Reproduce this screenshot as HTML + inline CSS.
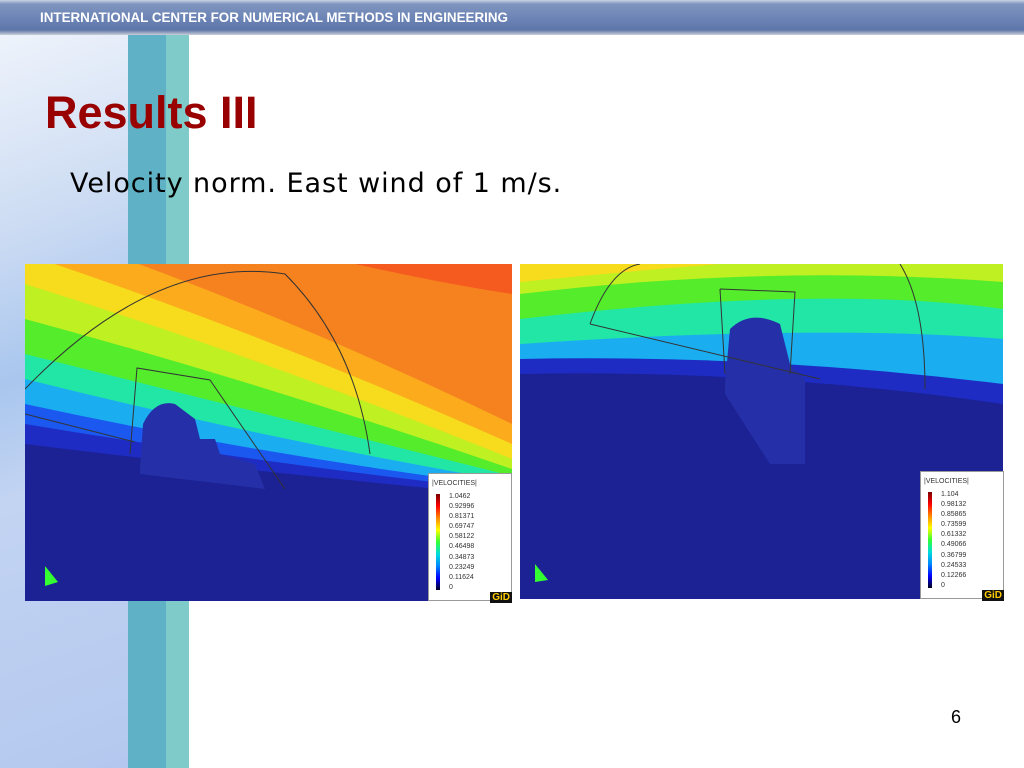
<!DOCTYPE html>
<html><head><meta charset="utf-8"><style>
*{margin:0;padding:0}
body{width:1024px;height:768px;position:relative;overflow:hidden;background:#fff;font-family:"Liberation Sans",sans-serif}
.hdr{position:absolute;left:0;top:0;width:1024px;height:35px;background:linear-gradient(#c9d3e2 0,#7f95bf 4px,#6a82b4 20px,#5d75a8 30px,#c9ced8 35px)}
.hdr span{position:absolute;left:40px;top:10px;color:#fff;font-weight:bold;font-size:13.4px;letter-spacing:0}
.sky{position:absolute;left:0;top:35px;width:128px;height:733px;background:linear-gradient(160deg,#eef3fb 0,#cddcf3 25%,#a9c6ee 45%,#c3d4f2 60%,#b4c8ef 100%)}
.t1{position:absolute;left:128px;top:35px;width:38px;height:733px;background:#5fb1c6}
.t2{position:absolute;left:166px;top:35px;width:23px;height:733px;background:#7fcbc9}
h1{position:absolute;left:45px;top:87px;color:#990000;font-size:45px;font-weight:bold;letter-spacing:0}
.sub{position:absolute;left:70px;top:168px;font-family:"DejaVu Sans",sans-serif;font-size:27px;letter-spacing:0.95px;color:#000}
.img{position:absolute}
.leg{position:absolute;background:#fff;border:1px solid #999;font-family:"Liberation Sans",sans-serif;font-size:7px;color:#333}
.pg{position:absolute;left:951px;top:707px;font-size:18px}
</style></head><body>
<div class="hdr"><span>INTERNATIONAL CENTER FOR NUMERICAL METHODS IN ENGINEERING</span></div>
<div class="sky"></div><div class="t1"></div><div class="t2"></div>
<h1>Results III</h1>
<div class="sub">Velocity norm. East wind of 1 m/s.</div>

<svg class="img" style="left:25px;top:264px" width="487" height="337" viewBox="0 0 487 337">
<rect width="487" height="337" fill="#f5821f"/>
<path d="M330,0 L487,0 L487,30 Q420,20 330,0Z" fill="#f55a1e"/>
<path d="M0,-40 Q240,40 487,160 L487,337 L0,337Z" fill="#fbab1c"/>
<path d="M0,-10 Q240,70 487,180 L487,337 L0,337Z" fill="#f6dc1c"/>
<path d="M0,20 Q240,95 487,195 L487,337 L0,337Z" fill="#bff021"/>
<path d="M0,55 Q240,120 487,205 L487,337 L0,337Z" fill="#55ec2c"/>
<path d="M0,90 Q240,150 487,212 L487,337 L0,337Z" fill="#22e6a6"/>
<path d="M0,115 Q240,175 487,218 L487,337 L0,337Z" fill="#1aaef0"/>
<path d="M0,140 Q240,192 487,223 L487,337 L0,337Z" fill="#1b58ef"/>
<path d="M0,160 Q240,200 487,227 L487,337 L0,337Z" fill="#1e2cc4"/>
<path d="M0,180 Q200,205 487,232 L487,337 L0,337Z" fill="#1c2193"/>
<path d="M115,205 L118,160 Q130,135 150,140 L170,155 L175,175 L190,175 L195,190 L230,200 L240,225 L115,210Z" fill="#2530a8"/>
<path d="M0,125 Q130,-10 260,10 Q330,80 345,190" fill="none" stroke="#333" stroke-width="1"/>
<path d="M105,190 L112,104 L185,116 L260,225" fill="none" stroke="#333" stroke-width="1"/>
<path d="M0,150 L110,178" fill="none" stroke="#333"/>
<path d="M20,302 L20,322 L33,318Z" fill="#3f3"/>
</svg>
<div class="leg" style="left:428px;top:473px;width:82px;height:126px">
<div style="position:absolute;left:3px;top:6px">|VELOCITIES|</div>
<div style="position:absolute;left:7px;top:20px;width:4px;height:96px;background:linear-gradient(#7a0000,#f00,#f80,#ff0,#3f3,#0dd,#08f,#00f,#002)"></div>
<div style="position:absolute;left:20px;top:18px;line-height:10.1px">1.0462<br>0.92996<br>0.81371<br>0.69747<br>0.58122<br>0.46498<br>0.34873<br>0.23249<br>0.11624<br>0</div>
<div style="position:absolute;right:-1px;bottom:-3px;background:#111;color:#fc0;font-weight:bold;font-size:10px;padding:0 2px">GiD</div>
</div>

<svg class="img" style="left:520px;top:264px" width="483" height="335" viewBox="0 0 483 335">
<rect width="483" height="335" fill="#1c2193"/>
<path d="M0,0 L483,0 L483,130 Q240,110 0,110Z" fill="#1aaef0"/>
<path d="M0,0 L483,0 L483,75 Q300,60 0,80Z" fill="#22e6a6"/>
<path d="M0,0 L483,0 L483,45 Q300,20 0,55Z" fill="#55ec2c"/>
<path d="M0,0 L483,0 L483,18 Q250,0 0,30Z" fill="#bff021"/>
<path d="M0,0 L200,0 Q100,8 0,18Z" fill="#f6dc1c"/>
<path d="M0,95 Q240,90 483,120 L483,335 L0,335Z" fill="#1e2cc4"/>
<path d="M0,110 Q240,105 483,140 L483,335 L0,335Z" fill="#1c2193"/>
<path d="M205,120 L210,65 Q230,45 260,60 L270,100 L285,115 L285,200 L250,200 L205,130Z" fill="#2530a8"/>
<path d="M70,60 Q90,5 120,0 M380,0 Q405,40 405,125" fill="none" stroke="#333"/>
<path d="M70,60 L300,115 M200,25 L275,28 L270,110 M200,25 L205,110" fill="none" stroke="#333"/>
<path d="M15,300 L15,318 L28,316Z" fill="#3f3"/>
</svg>
<div class="leg" style="left:920px;top:471px;width:82px;height:126px">
<div style="position:absolute;left:3px;top:6px">|VELOCITIES|</div>
<div style="position:absolute;left:7px;top:20px;width:4px;height:96px;background:linear-gradient(#7a0000,#f00,#f80,#ff0,#3f3,#0dd,#08f,#00f,#002)"></div>
<div style="position:absolute;left:20px;top:18px;line-height:10.1px">1.104<br>0.98132<br>0.85865<br>0.73599<br>0.61332<br>0.49066<br>0.36799<br>0.24533<br>0.12266<br>0</div>
<div style="position:absolute;right:-1px;bottom:-3px;background:#111;color:#fc0;font-weight:bold;font-size:10px;padding:0 2px">GiD</div>
</div>
<div class="pg">6</div>
</body></html>
